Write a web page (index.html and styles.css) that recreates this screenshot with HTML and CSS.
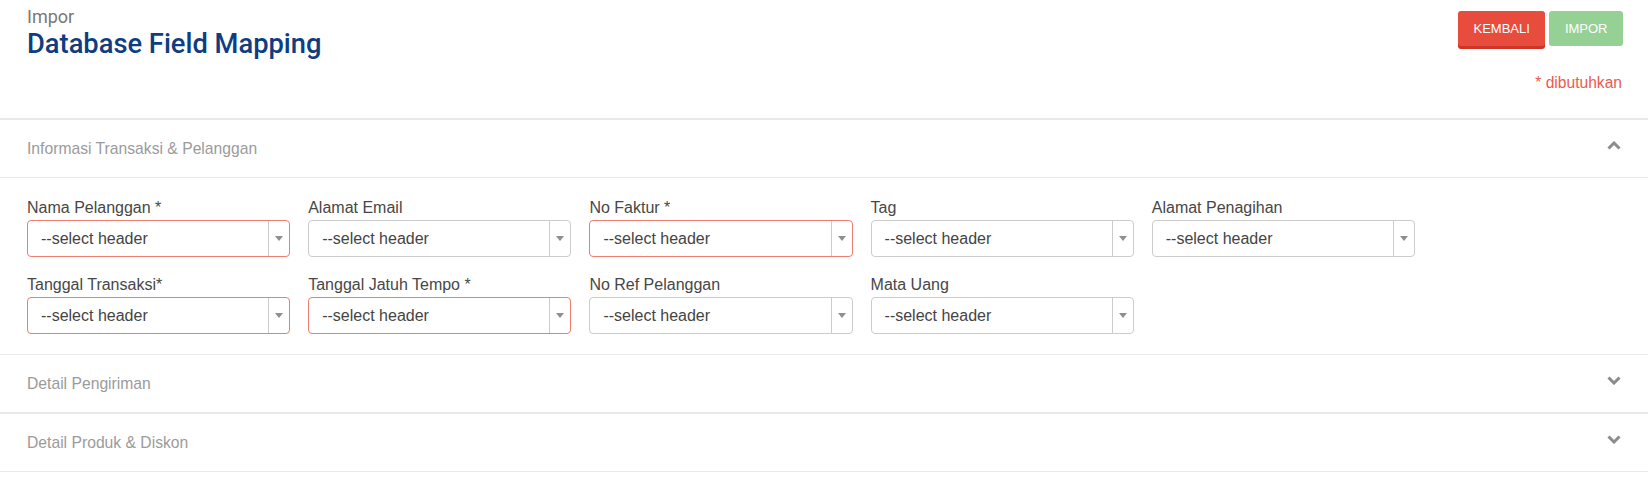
FILE: index.html
```html
<!DOCTYPE html>
<html lang="id">
<head>
<meta charset="utf-8">
<title>Database Field Mapping</title>
<link rel="stylesheet" href="styles.css">
</head>
<body>
<div class="page-header">
  <div class="titles">
    <div class="crumb">Impor</div>
    <h1 class="title">Database Field Mapping</h1>
  </div>
  <div class="actions">
    <div class="buttons">
      <button class="btn btn-back">KEMBALI</button>
      <button class="btn btn-import">IMPOR</button>
    </div>
    <div class="required-note">* dibutuhkan</div>
  </div>
</div>

<div class="accordion">
  <div class="section open">
    <div class="section-head">
      <span class="section-title">Informasi Transaksi &amp; Pelanggan</span>
      <svg class="chev" width="14" height="9" viewBox="0 0 14 9"><polyline points="1.5,7.5 7,2 12.5,7.5" fill="none" stroke="#8c8c8c" stroke-width="3"/></svg>
    </div>
    <div class="section-body">
      <div class="field">
        <label class="field-label">Nama Pelanggan *</label>
        <div class="select required"><span class="select-text">--select header</span><span class="select-arrow"><i class="tri"></i></span></div>
      </div>
      <div class="field">
        <label class="field-label">Alamat Email</label>
        <div class="select"><span class="select-text">--select header</span><span class="select-arrow"><i class="tri"></i></span></div>
      </div>
      <div class="field">
        <label class="field-label">No Faktur *</label>
        <div class="select required"><span class="select-text">--select header</span><span class="select-arrow"><i class="tri"></i></span></div>
      </div>
      <div class="field">
        <label class="field-label">Tag</label>
        <div class="select"><span class="select-text">--select header</span><span class="select-arrow"><i class="tri"></i></span></div>
      </div>
      <div class="field">
        <label class="field-label">Alamat Penagihan</label>
        <div class="select"><span class="select-text">--select header</span><span class="select-arrow"><i class="tri"></i></span></div>
      </div>
      <div class="field">
        <label class="field-label">Tanggal Transaksi*</label>
        <div class="select required"><span class="select-text">--select header</span><span class="select-arrow"><i class="tri"></i></span></div>
      </div>
      <div class="field">
        <label class="field-label">Tanggal Jatuh Tempo *</label>
        <div class="select required"><span class="select-text">--select header</span><span class="select-arrow"><i class="tri"></i></span></div>
      </div>
      <div class="field">
        <label class="field-label">No Ref Pelanggan</label>
        <div class="select"><span class="select-text">--select header</span><span class="select-arrow"><i class="tri"></i></span></div>
      </div>
      <div class="field">
        <label class="field-label">Mata Uang</label>
        <div class="select"><span class="select-text">--select header</span><span class="select-arrow"><i class="tri"></i></span></div>
      </div>
    </div>
  </div>
  <div class="section thick">
    <div class="section-head">
      <span class="section-title">Detail Pengiriman</span>
      <svg class="chev" width="14" height="9" viewBox="0 0 14 9"><polyline points="1.5,1.5 7,7 12.5,1.5" fill="none" stroke="#8c8c8c" stroke-width="3"/></svg>
    </div>
  </div>
  <div class="section">
    <div class="section-head">
      <span class="section-title">Detail Produk &amp; Diskon</span>
      <svg class="chev" width="14" height="9" viewBox="0 0 14 9"><polyline points="1.5,1.5 7,7 12.5,1.5" fill="none" stroke="#8c8c8c" stroke-width="3"/></svg>
    </div>
  </div>
</div>
</body>
</html>
```

FILE: styles.css
```css
html, body {
  margin: 0;
  padding: 0;
  background: #ffffff;
}

body {
  font-family: "Liberation Sans", Arial, sans-serif;
  color: #444444;
}

.page-header {
  display: flex;
  justify-content: space-between;
  align-items: flex-start;
  padding: 0 25px 0 27px;
  border-bottom: 2px solid #e9e9e9;
  box-sizing: border-box;
  height: 120px;
}

.titles {
  padding-top: 5px;
}

.crumb {
  font-family: Roboto, "Liberation Sans", sans-serif;
  font-size: 18px;
  line-height: 23px;
  color: #787878;
}

.title {
  margin: 0;
  font-family: Roboto, "Liberation Sans", sans-serif;
  font-size: 27.3px;
  font-weight: 500;
  line-height: 32px;
  color: #0f3d7f;
}

.actions {
  display: flex;
  flex-direction: column;
  align-items: flex-end;
  padding-top: 11px;
}

.buttons {
  display: flex;
  gap: 4px;
}

.btn {
  font-family: "Liberation Sans", Arial, sans-serif;
  font-size: 13px;
  height: 35px;
  padding: 0 15.5px;
  border: none;
  border-radius: 3px;
  color: #ffffff;
  cursor: pointer;
}

.btn-back {
  background: #e74c3c;
  box-shadow: 0 3px 0 #cf3526;
}

.btn-import {
  background: #95d195;
}

.required-note {
  margin-top: 28px;
  margin-right: 1px;
  font-size: 15.6px;
  line-height: 18px;
  color: #ec5a4f;
}

.section {
  border-bottom: 1px solid #e9e9e9;
}

.section.thick {
  border-bottom-width: 2px;
}

.section-head {
  display: flex;
  justify-content: space-between;
  align-items: center;
  height: 57px;
  padding: 0 27px 0 27px;
  box-sizing: border-box;
}

.section-title {
  font-size: 15.7px;
  color: #9b9b9b;
}

.chev {
  display: block;
  margin-top: -6px;
}

.section.open .section-head {
  border-bottom: 1px solid #e9e9e9;
  height: 58px;
}

.section-body {
  display: grid;
  grid-template-columns: repeat(5, 263.2px);
  column-gap: 18px;
  row-gap: 19px;
  padding: 21px 27px 20px 27px;
}

.field {
  display: flex;
  flex-direction: column;
}

.field-label {
  font-size: 16px;
  line-height: 18px;
  margin-bottom: 3px;
  color: #474747;
}

.select {
  display: flex;
  height: 37px;
  box-sizing: border-box;
  border: 1px solid #cccccc;
  border-radius: 4px;
  background: #ffffff;
}

.select.required {
  border-color: #ef7d72;
}

.select-text {
  flex: 1;
  padding-left: 13px;
  font-size: 16px;
  line-height: 35px;
  color: #444444;
}

.select-arrow {
  width: 20px;
  border-left: 1px solid #cccccc;
  display: flex;
  align-items: center;
  justify-content: center;
}

.tri {
  display: block;
  width: 0;
  height: 0;
  border-left: 4px solid transparent;
  border-right: 4px solid transparent;
  border-top: 5px solid #8f8f8f;
}
```
